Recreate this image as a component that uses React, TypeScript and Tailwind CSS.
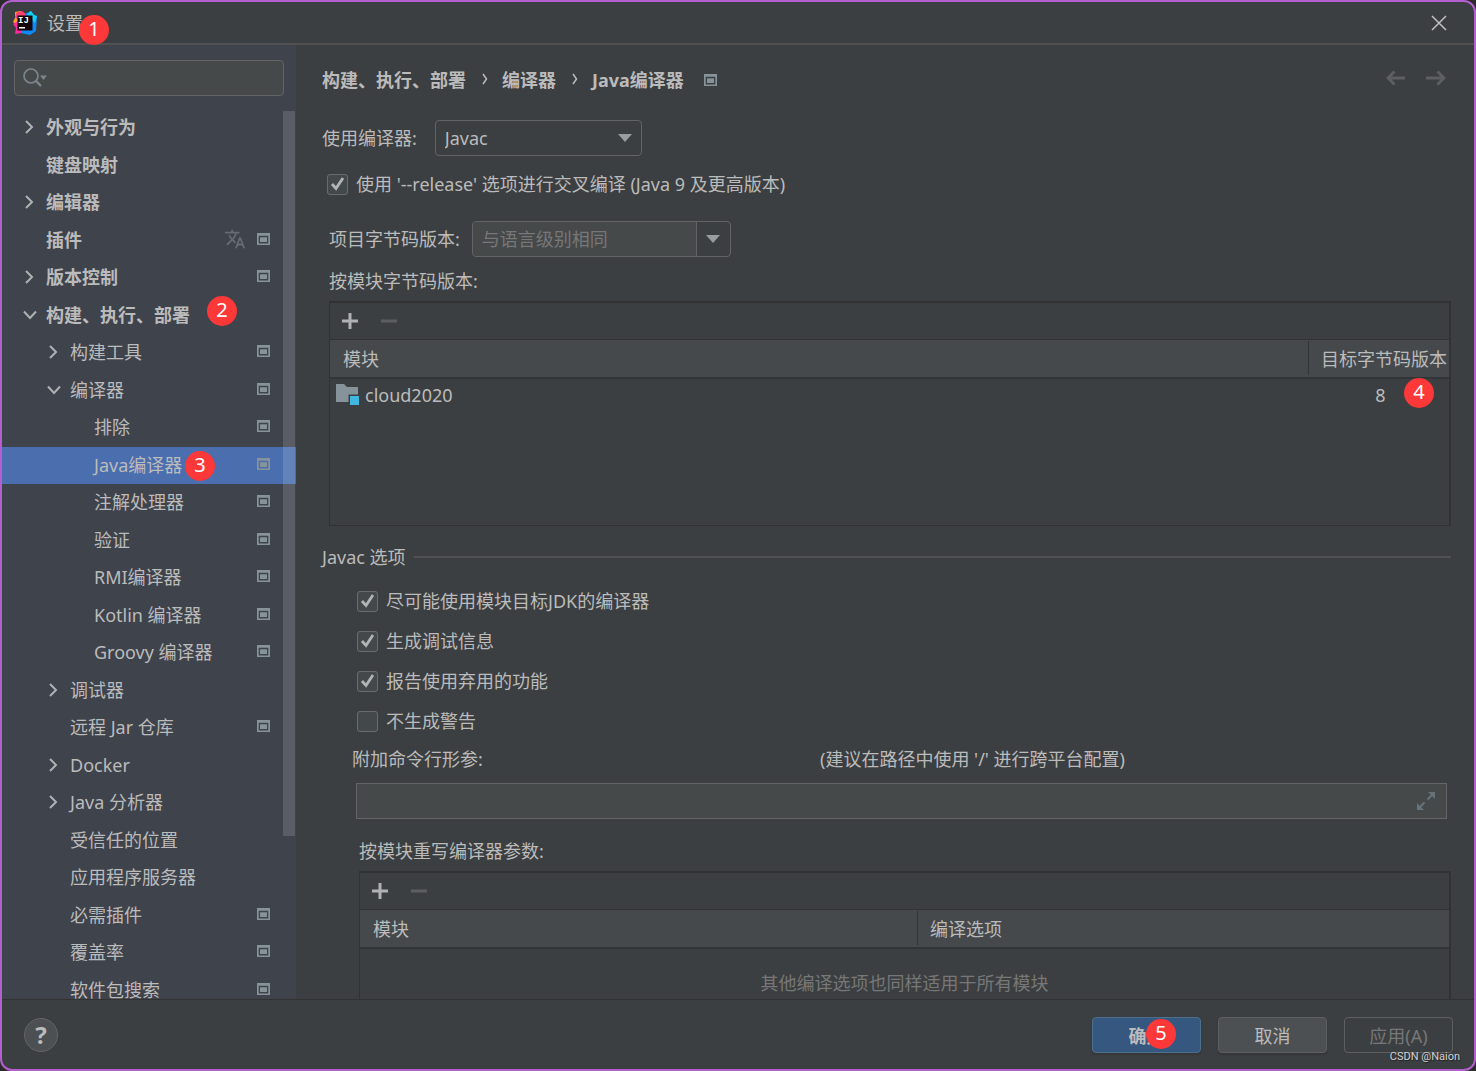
import { useState } from 'react'
import type { ReactNode } from 'react'
import { MdTranslate } from 'react-icons/md'

type TreeNode = {
    label: string
    level: 0 | 1 | 2
    arrow?: 'right' | 'down'
    project?: boolean
    translate?: boolean
    badge?: number
}

const nodes: TreeNode[] = [
    { label: '外观与行为', level: 0, arrow: 'right' },
    { label: '键盘映射', level: 0 },
    { label: '编辑器', level: 0, arrow: 'right' },
    { label: '插件', level: 0, project: true, translate: true },
    { label: '版本控制', level: 0, arrow: 'right', project: true },
    { label: '构建、执行、部署', level: 0, arrow: 'down', badge: 2 },
    { label: '构建工具', level: 1, arrow: 'right', project: true },
    { label: '编译器', level: 1, arrow: 'down', project: true },
    { label: '排除', level: 2, project: true },
    { label: 'Java编译器', level: 2, project: true, badge: 3 },
    { label: '注解处理器', level: 2, project: true },
    { label: '验证', level: 2, project: true },
    { label: 'RMI编译器', level: 2, project: true },
    { label: 'Kotlin 编译器', level: 2, project: true },
    { label: 'Groovy 编译器', level: 2, project: true },
    { label: '调试器', level: 1, arrow: 'right' },
    { label: '远程 Jar 仓库', level: 1, project: true },
    { label: 'Docker', level: 1, arrow: 'right' },
    { label: 'Java 分析器', level: 1, arrow: 'right' },
    { label: '受信任的位置', level: 1 },
    { label: '应用程序服务器', level: 1 },
    { label: '必需插件', level: 1, project: true },
    { label: '覆盖率', level: 1, project: true },
    { label: '软件包搜索', level: 1, project: true },
]

const indents = ['pl-5 font-bold', 'pl-11', 'pl-[68px]']

/* Small window icon: the setting belongs to the current project */
const ProjectIcon = () => (
    <svg width="13" height="12" viewBox="0 0 13 12" className="shrink-0" fill="#87939a" aria-hidden="true">
        <path fillRule="evenodd" d="M0 0H13V12H0ZM1.7 2.7V10.6H11.3V2.7Z" />
        <rect x="3" y="4.3" width="7" height="4.7" />
    </svg>
)

const Chevron = ({ dir }: { dir: 'right' | 'down' }) => (
    <svg width="16" height="16" viewBox="0 0 16 16" fill="none" stroke="#afb1b3" strokeWidth="2" aria-hidden="true">
        <path d={dir === 'right' ? 'M4 2L10 8L4 14' : 'M2 4.5L8 11L14 4.5'} />
    </svg>
)

const Caret = () => (
    <svg width="14" height="8" viewBox="0 0 14 8" fill="#9a9da0" aria-hidden="true">
        <path d="M0 0H14L7 8Z" />
    </svg>
)

const IdeaLogo = () => (
    <svg width="24" height="24" viewBox="0 0 24 24" aria-hidden="true">
        <path d="M2 1L7 0L13 3L12 14L5 15L0 11L2 7Z" fill="#fe9a2e" />
        <path d="M4 1L9 0L14 4L8 12L2 6Z" fill="#fe3c6e" />
        <path d="M0 13L5 10L12 16L9 22L2 23L3 17Z" fill="#fe2a9c" />
        <path d="M12 3L18 0L21 4L24 5L23 20L17 24L8 22L14 12Z" fill="#0a8cfa" />
        <path d="M14 3L18 0L21 4L24 5L22 12L18 8Z" fill="#14d0f0" />
        <rect x="4.5" y="4.5" width="15" height="15" fill="#120608" />
        <text x="5" y="12" fontSize="9" fontWeight="700" fontFamily="Liberation Mono, monospace" fill="#fff">IJ</text>
        <rect x="6" y="16" width="6" height="1.5" fill="#fff" />
    </svg>
)

const Badge = ({ n, className }: { n: number, className: string }) => (
    <span className={`absolute z-10 flex size-[30px] items-center justify-center rounded-full bg-[#fc3838] pb-[2px] text-xl leading-6 font-normal text-white ${className}`}>
        {n}
    </span>
)

const TreeRow = ({ node, selected, onSelect }: { node: TreeNode, selected: boolean, onSelect: () => void }) => (
    <li className="odd:h-[38px] even:h-[37px]">
        <button
            type="button"
            onClick={onSelect}
            className={`flex h-full w-full items-center pr-[26px] pb-[2px] text-left ${indents[node.level]} ${selected ? 'bg-[#4b6eaf]' : ''}`}
        >
            <span className="w-6 shrink-0">{node.arrow && <Chevron dir={node.arrow} />}</span>
            <span className="relative whitespace-nowrap">
                {node.label}
                {node.badge === 2 && <Badge n={2} className="-top-[7px] left-[161px]" />}
                {node.badge === 3 && <Badge n={3} className="-top-[2px] left-[91px]" />}
            </span>
            <span className="ml-auto flex items-center gap-[11px] pb-[2px]">
                {node.translate && <MdTranslate size={22} color="#656c74" />}
                {node.project && <ProjectIcon />}
            </span>
        </button>
    </li>
)

const Check = ({ label, checked = false }: { label: string, checked?: boolean }) => (
    <label className="flex h-6 items-center gap-2">
        <span className="relative size-[21px] shrink-0">
            <input
                type="checkbox"
                defaultChecked={checked}
                className="peer block size-[21px] appearance-none rounded-[3px] border border-[#6b6b6b] bg-[#43494a]"
            />
            <svg viewBox="0 0 21 21" className="pointer-events-none absolute inset-0 hidden peer-checked:block" aria-hidden="true">
                <path d="M5 10L9 14.5L16 4" fill="none" stroke="#b4b4b4" strokeWidth="2.8" />
            </svg>
        </span>
        {label}
    </label>
)

/* Bordered table with the add / remove toolbar on top */
const ToolbarTable = ({ children }: { children: ReactNode }) => (
    <div className="mt-[7px] h-[225px] shrink-0 border-t-2 border-r-2 border-b border-l border-[#323232]">
        <div className="flex h-9 items-center gap-[23px] pl-3">
            <button type="button" aria-label="添加">
                <svg width="16" height="16" viewBox="0 0 16 16" fill="#afb1b3"><path d="M6.5 0H9.5V6.5H16V9.5H9.5V16H6.5V9.5H0V6.5H6.5Z" /></svg>
            </button>
            <button type="button" aria-label="移除" disabled>
                <svg width="16" height="16" viewBox="0 0 16 16" fill="#5c5e60"><path d="M0 6.5H16V9.5H0Z" /></svg>
            </button>
        </div>
        <table className="w-full table-fixed border-collapse">{children}</table>
    </div>
)

const HeadCell = ({ children, className = '', first = false }: { children: ReactNode, className?: string, first?: boolean }) => (
    <th className={`h-[38px] border-t border-b-2 border-t-[#323232] border-b-[#323537] bg-[#45494b] p-0 text-left font-normal ${className}`}>
        <div className={`flex h-[34px] items-center pt-[2px] whitespace-nowrap ${first ? 'pl-[13px]' : 'border-l border-[#323537] pl-3'}`}>{children}</div>
    </th>
)

const App = () => {
    const [selected, setSelected] = useState('Java编译器')

    return (
        <div className="h-screen bg-[#2b2b2b] font-['Noto_Sans','Noto_Sans_CJK_SC',sans-serif] text-lg leading-6 text-[#bbbbbb]">
            <div className="relative flex h-full flex-col overflow-hidden rounded-xl border-2 border-[#b45fd0] bg-[#3c3f41]">
                <header className="flex h-[43px] shrink-0 items-center border-b-2 border-[#515151] pr-[27px] pl-[11px]">
                    <IdeaLogo />
                    <h1 className="relative ml-[10px]">
                        设置
                        <Badge n={1} className="top-1 left-8" />
                    </h1>
                    <button type="button" aria-label="关闭" className="ml-auto">
                        <svg width="16" height="16" viewBox="0 0 16 16" stroke="#c0c0c0" strokeWidth="1.5"><path d="M1 1L15 15M15 1L1 15" /></svg>
                    </button>
                </header>

                <div className="flex min-h-0 flex-1">
                    <aside className="relative w-[294px] shrink-0 overflow-hidden bg-[#3f434c]">
                        <div className="px-3 pt-[15px] pb-[13px]">
                            <label className="flex h-9 items-center rounded border border-[#646464] bg-[#45494a] pl-2">
                                <svg width="26" height="20" viewBox="0 0 26 20" fill="none" aria-hidden="true">
                                    <circle cx="8" cy="8" r="7" stroke="#7a858c" strokeWidth="1.7" />
                                    <path d="M12.5 12.5L18 18" stroke="#7a858c" strokeWidth="2.4" />
                                    <path d="M17 7.5H24L20.5 12Z" fill="#7a858c" />
                                </svg>
                                <input type="text" aria-label="搜索" className="min-w-0 flex-1 bg-transparent px-1 outline-none" />
                            </label>
                        </div>
                        <ul>
                            {nodes.map((node) => (
                                <TreeRow
                                    key={node.label}
                                    node={node}
                                    selected={node.label === selected}
                                    onSelect={() => setSelected(node.label)}
                                />
                            ))}
                        </ul>
                        {/* scrollbar thumb */}
                        <div className="absolute top-[66px] right-px h-[725px] w-3 bg-white/14" />
                    </aside>

                    <main className="flex min-w-0 flex-1 flex-col overflow-hidden pr-[23px] pl-[26px]">
                        <div className="mt-[23px] flex shrink-0 items-center">
                            <nav className="flex items-center font-bold">
                                <a href="#build">构建、执行、部署</a>
                                <svg width="36" height="14" viewBox="0 0 36 14" fill="none" stroke="#bbbbbb" strokeWidth="1.5" aria-hidden="true"><path d="M17 1L20.5 6L17 11" /></svg>
                                <a href="#compiler">编译器</a>
                                <svg width="36" height="14" viewBox="0 0 36 14" fill="none" stroke="#bbbbbb" strokeWidth="1.5" aria-hidden="true"><path d="M17 1L20.5 6L17 11" /></svg>
                                <a href="#java" className="mr-5">Java编译器</a>
                                <ProjectIcon />
                            </nav>
                            <div className="ml-auto flex gap-5 pr-[5px] pb-1">
                                <button type="button" aria-label="后退" disabled>
                                    <svg width="20" height="16" viewBox="0 0 20 16" fill="none" stroke="#5d5f61" strokeWidth="2.8"><path d="M19 8H2M8.5 1.5L2 8L8.5 14.5" /></svg>
                                </button>
                                <button type="button" aria-label="前进" disabled>
                                    <svg width="20" height="16" viewBox="0 0 20 16" fill="none" stroke="#5d5f61" strokeWidth="2.8"><path d="M0 8H18M11.5 1.5L18 8L11.5 14.5" /></svg>
                                </button>
                            </div>
                        </div>

                        <div className="mt-7 flex shrink-0 items-center gap-[18px]">
                            <label htmlFor="compiler">使用编译器:</label>
                            <div className="relative">
                                <select id="compiler" className="block h-9 w-[207px] appearance-none rounded border border-[#646464] bg-[#3c3f41] pl-[9px]">
                                    <option>Javac</option>
                                    <option>Eclipse</option>
                                </select>
                                <span className="pointer-events-none absolute top-[14px] right-[10px]"><Caret /></span>
                            </div>
                        </div>

                        <div className="mt-4 shrink-0 pl-[5px]">
                            <Check label="使用 '--release' 选项进行交叉编译 (Java 9 及更高版本)" checked />
                        </div>

                        <div className="mt-[25px] flex shrink-0 items-center gap-3 pl-[7px]">
                            <label htmlFor="bytecode">项目字节码版本:</label>
                            <div className="flex h-9 w-[259px] rounded border border-[#646464]">
                                <input
                                    id="bytecode"
                                    type="text"
                                    placeholder="与语言级别相同"
                                    className="min-w-0 flex-1 rounded-l bg-[#45494a] pl-[9px] outline-none placeholder:text-[#777777]"
                                />
                                <button type="button" aria-label="选择版本" className="flex w-[34px] items-center justify-center border-l border-[#646464]">
                                    <Caret />
                                </button>
                            </div>
                        </div>

                        <div className="mt-3 shrink-0 pl-[7px]">
                            <h2 className="pb-px">按模块字节码版本:</h2>
                            <ToolbarTable>
                                <thead>
                                    <tr>
                                        <HeadCell first>模块</HeadCell>
                                        <HeadCell className="w-[141px]">目标字节码版本</HeadCell>
                                    </tr>
                                </thead>
                                <tbody>
                                    <tr className="h-[34px]">
                                        <td className="p-0">
                                            <div className="flex items-center gap-[5px] pl-[6px]">
                                                <svg width="24" height="22" viewBox="0 0 24 22" aria-hidden="true">
                                                    <path d="M0 0H8L11 3H22V18H0Z" fill="#87939a" />
                                                    <path d="M12.5 10.5H24V22H12.5Z" fill="#3c3f41" />
                                                    <path d="M14 12H23V21H14Z" fill="#40b6e0" />
                                                </svg>
                                                cloud2020
                                            </div>
                                        </td>
                                        <td className="relative p-0 text-center">
                                            <span className="pl-1">8</span>
                                            <Badge n={4} className="-top-px right-[15px]" />
                                        </td>
                                    </tr>
                                </tbody>
                            </ToolbarTable>
                        </div>

                        <div className="mt-[19px] flex shrink-0 items-center gap-2">
                            <h2>Javac 选项</h2>
                            <div className="h-[2px] flex-1 bg-[#515151]" />
                        </div>

                        <div className="mt-5 flex shrink-0 flex-col gap-4 pl-[35px]">
                            <Check label="尽可能使用模块目标JDK的编译器" checked />
                            <Check label="生成调试信息" checked />
                            <Check label="报告使用弃用的功能" checked />
                            <Check label="不生成警告" />
                        </div>

                        <div className="mt-[14px] flex shrink-0 pl-[30px]">
                            <label htmlFor="params" className="w-[468px]">附加命令行形参:</label>
                            <span>(建议在路径中使用 '/' 进行跨平台配置)</span>
                        </div>
                        <div className="mt-3 mr-1 ml-[34px] flex h-9 shrink-0 items-center border border-[#646464] bg-[#45494a] pr-[10px]">
                            <input id="params" type="text" className="h-full min-w-0 flex-1 bg-transparent px-2 outline-none" />
                            <button type="button" aria-label="展开">
                                <svg width="20" height="20" viewBox="0 0 20 20" fill="#67737a" stroke="#67737a">
                                    <path d="M12 1H19V8ZM1 12V19H8Z" stroke="none" />
                                    <path d="M11.5 8.5L16 4M8.5 11.5L4 16" strokeWidth="2" />
                                </svg>
                            </button>
                        </div>

                        <div className="mt-5 shrink-0 pl-[37px]">
                            <h2 className="pb-px">按模块重写编译器参数:</h2>
                            <ToolbarTable>
                                <thead>
                                    <tr>
                                        <HeadCell first className="w-[557px]">模块</HeadCell>
                                        <HeadCell>编译选项</HeadCell>
                                    </tr>
                                </thead>
                                <tbody>
                                    <tr className="h-[70px]">
                                        <td colSpan={2} className="p-0 text-center text-[#777777]">其他编译选项也同样适用于所有模块</td>
                                    </tr>
                                </tbody>
                            </ToolbarTable>
                        </div>
                    </main>
                </div>

                <footer className="flex h-[70px] shrink-0 items-center gap-[17px] border-t border-[#323232] pr-[21px] pl-[22px]">
                    <button type="button" aria-label="帮助" className="mr-auto flex size-[34px] items-center justify-center rounded-full border border-[#646464] bg-[#4c5052] text-2xl font-bold">
                        ?
                    </button>
                    <button type="button" className="relative h-9 w-[109px] rounded border border-[#4c708c] bg-[#365880] pt-[2px] font-bold shadow-[0_2px_2px_#353739]">
                        确定
                        <Badge n={5} className="top-px left-[53px]" />
                    </button>
                    <button type="button" className="h-9 w-[109px] rounded border border-[#5e6060] bg-[#4c5052] pt-[2px] shadow-[0_2px_2px_#353739]">取消</button>
                    <button type="button" disabled className="h-9 w-[109px] rounded border border-[#5e6060] pt-[2px] text-[#777777]">应用(A)</button>
                </footer>

                <span className="absolute right-[14px] bottom-1 font-['Roboto',sans-serif] text-[11px] leading-4 text-[#d0d0d0] [text-shadow:1px_1px_1px_#222]">
                    CSDN @Naion
                </span>
            </div>
        </div>
    )
}

export default App
